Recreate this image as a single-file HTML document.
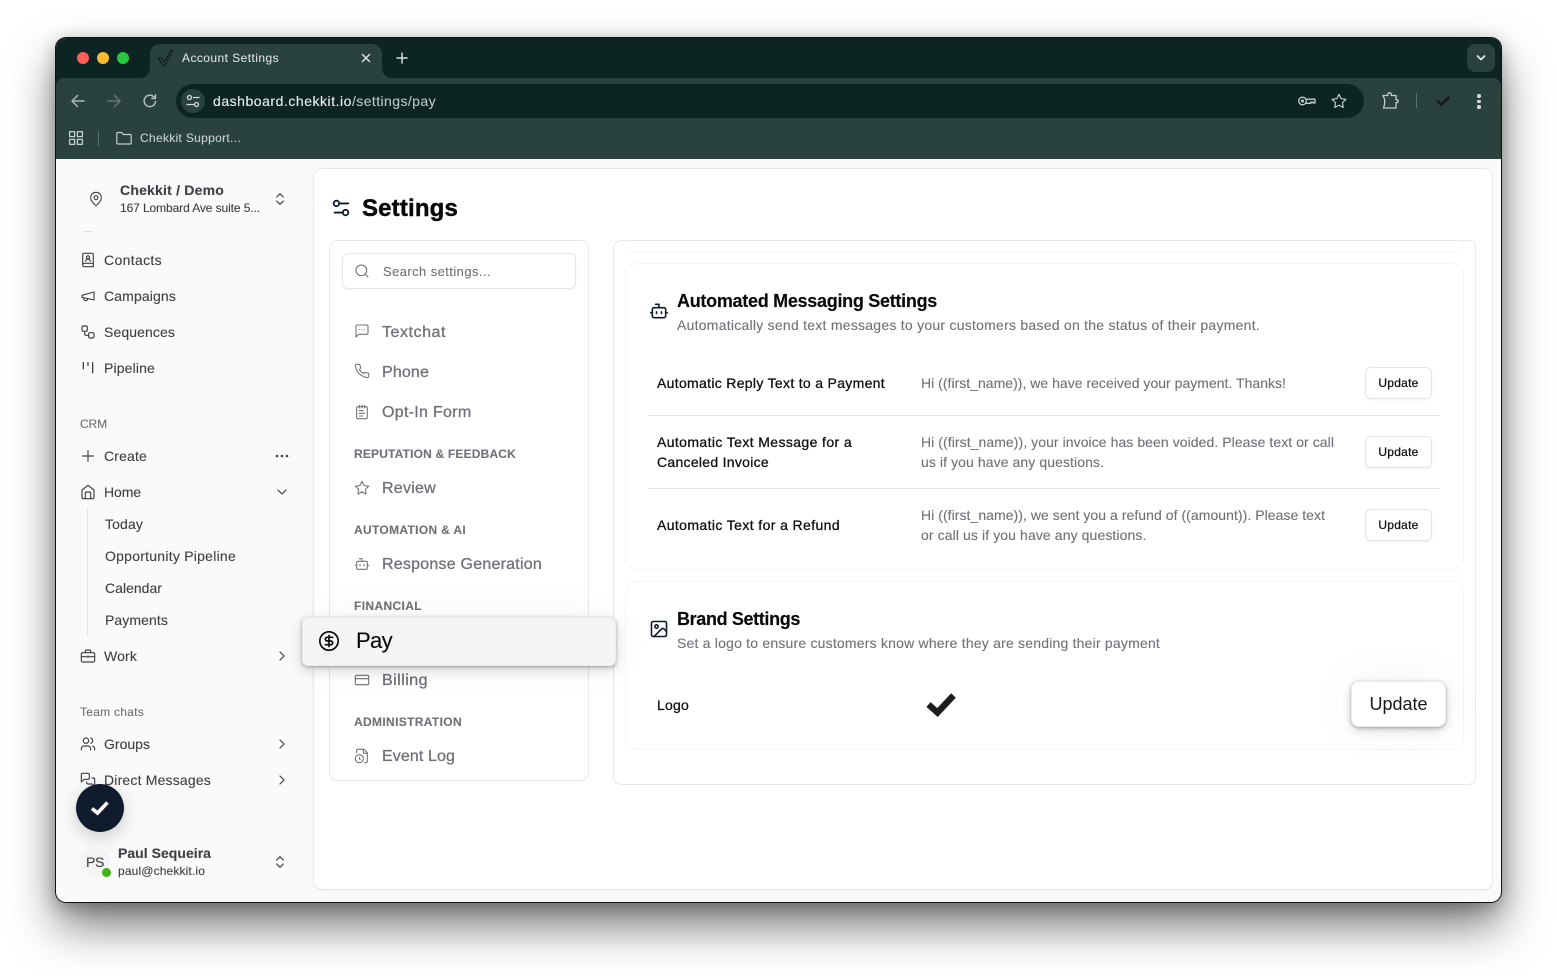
<!DOCTYPE html>
<html lang="en"><head><meta charset="utf-8"><title>Account Settings</title>
<style>
*{box-sizing:border-box}
html,body{margin:0;padding:0;width:1557px;height:976px;overflow:hidden;background:#fff;font-family:"Liberation Sans",Arial,sans-serif}
.a{position:absolute}
#win{position:absolute;left:56px;top:38px;width:1445px;height:864px;border-radius:10px;background:#fafafa;box-shadow:0 0 0 1px #111,0 24px 46px rgba(0,0,0,.52),0 4px 18px rgba(0,0,0,.28)}
#root{position:absolute;left:0;top:0;width:1557px;height:976px;overflow:hidden}
.t{position:absolute;white-space:nowrap;line-height:20px;margin-top:-10px;color:#3f3f46;font-size:14px;-webkit-text-stroke:.12px currentColor}
.s12{font-size:12px}.s13{font-size:13px}.s16{font-size:16px}
.b{font-weight:700}
.nav{font-size:16px;color:#71717a;-webkit-text-stroke:.3px #71717a}
.cap{font-size:12px;font-weight:700;color:#71717a}
.lab{color:#111;-webkit-text-stroke:.3px #111}
.msg{color:#71717a}
.hd{font-size:18px;font-weight:700;color:#0a0a0a;-webkit-text-stroke:.15px #0a0a0a}
svg.i{position:absolute;fill:none;stroke:currentColor;stroke-width:2;stroke-linecap:round;stroke-linejoin:round;overflow:visible}
.sb{color:#3f3f46;width:16px;height:16px}
.sn{color:#71717a;width:16px;height:16px}
.br{color:#c3cfcc;width:18px;height:18px}
.btn{position:absolute;left:1365px;width:67px;height:32px;border:1px solid #e5e5e5;border-radius:6px;background:#fff;box-shadow:0 1px 2px rgba(0,0,0,.06);font:12px/30px "Liberation Sans",sans-serif;color:#111;text-align:center;padding:0;-webkit-text-stroke:.25px #111;letter-spacing:.25px}
.card{position:absolute;background:#fff;border:1px solid #f6f6f6;border-radius:12px}
</style></head><body>
<div id="root">
<div id="win"></div>

<!-- browser chrome -->
<div class="a" style="left:56px;top:38px;width:1445px;height:121px;background:#0c2522;border-radius:10px 10px 0 0"></div>
<div class="a" style="left:56px;top:78px;width:1445px;height:81px;background:#2a423e;border-radius:8px 8px 0 0"></div>
<div class="a" style="left:150px;top:44px;width:232px;height:34px;background:#2a423e;border-radius:10px 10px 0 0"></div>
<svg class="a" style="left:140px;top:68px" width="10" height="10"><path d="M10 0V10H0A10 10 0 0 0 10 0Z" fill="#2a423e"/></svg>
<svg class="a" style="left:382px;top:68px" width="10" height="10"><path d="M0 0V10H10A10 10 0 0 1 0 0Z" fill="#2a423e"/></svg>
<div class="a" style="left:77px;top:52px;width:12px;height:12px;border-radius:50%;background:#ff5f57"></div>
<div class="a" style="left:97px;top:52px;width:12px;height:12px;border-radius:50%;background:#febc2e"></div>
<div class="a" style="left:117px;top:52px;width:12px;height:12px;border-radius:50%;background:#28c840"></div>
<svg class="a" style="left:157px;top:49px" width="18" height="18" fill="none" stroke="#0f1c1c" stroke-width="1" stroke-linejoin="round"><path d="M1.500 9.500 4 8.500 7 13 14 1.500 16 1 7.500 16.500 6 16.500Z"/></svg>
<span class="t s12" style="left:182px;top:58px;color:#d8dfdd;--w:97">Account Settings</span>
<svg class="i" style="left:361px;top:53px;color:#d8dfdd;stroke-width:1.500" width="10" height="10" viewBox="0 0 10 10"><path d="M1.500 1.500l7 7M8.500 1.500l-7 7"/></svg>
<svg class="i" style="left:396px;top:52px;color:#d8dfdd;stroke-width:1.500" width="12" height="12" viewBox="0 0 12 12"><path d="M6 1v10M1 6h10"/></svg>
<div class="a" style="left:1467px;top:44px;width:28px;height:28px;border-radius:8px;background:#2a423e"></div>
<svg class="i" style="left:1476px;top:55px;color:#e3e8e7;stroke-width:1.700" width="10" height="6" viewBox="0 0 10 6"><path d="M1.500 1 5 4.500 8.500 1"/></svg>

<svg class="i" style="left:70px;top:93px;color:#a9b7b4;stroke-width:1.500" width="16" height="16" viewBox="0 0 16 16"><path d="M14 8H2.500M7.500 2.500 2 8l5.500 5.500"/></svg>
<svg class="i" style="left:106px;top:93px;color:#64766f;stroke-width:1.500" width="16" height="16" viewBox="0 0 16 16"><path d="M2 8h11.500M8.500 2.500 14 8l-5.500 5.500"/></svg>
<svg class="i" style="left:142px;top:93px;color:#b2bfbc;stroke-width:1.500" width="16" height="16" viewBox="0 0 16 16"><path d="M13.500 8.500A5.700 5.700 0 1 1 11.800 3.800L13.500 5.500M13.500 1.800v3.700H9.800"/></svg>
<div class="a" style="left:176px;top:84px;width:1188px;height:34px;border-radius:17px;background:#0c2522"></div>
<div class="a" style="left:181px;top:89px;width:24px;height:24px;border-radius:50%;background:#2a423e"></div>
<svg class="i" style="left:186px;top:94px;color:#d3dbd9;stroke-width:1.300" width="14" height="14" viewBox="0 0 14 14"><circle cx="3.500" cy="3.500" r="2"/><path d="M7.500 3.500H13M1 10.500h6.500"/><circle cx="10.500" cy="10.500" r="2"/></svg>
<span class="t" style="left:213px;top:101px;color:#e9eeec;--w:139">dashboard.chekkit.io</span>
<span class="t" style="left:352px;top:101px;color:#b7c3c0;--w:84">/settings/pay</span>
<svg class="i" style="left:1298px;top:95px;color:#c3cfcc;stroke-width:1.300" width="18" height="12" viewBox="0 0 18 12"><circle cx="4.500" cy="6" r="3.800"/><circle cx="4.500" cy="6" r=".9"/><path d="M8.300 4.200h8.700v3.800h-2V7h-2v1.300H8.300"/></svg>
<svg class="i br" style="left:1330px;top:92px;stroke-width:1.500" viewBox="0 0 24 24"><path d="M12 3l2.800 5.900 6.400.9-4.600 4.500 1.100 6.400L12 17.700l-5.700 3 1.100-6.400-4.600-4.500 6.400-.9z"/></svg>
<svg class="i br" style="left:1381px;top:92px;stroke-width:1.300" viewBox="0 0 18 18"><path d="M2 3.500h4.700V2.500a1.800 1.800 0 0 1 3.600 0v1H15v4.300h.7a1.400 1.400 0 0 1 0 2.800H15v5.400H2.500L3.600 12.200 3.600 7.200z"/></svg>
<div class="a" style="left:1416px;top:93px;width:1px;height:15px;background:#5a6e6a"></div>
<svg class="a" style="left:1434px;top:93px" width="18" height="16" fill="none"><path d="M3 7.500 7 11.500 15.500 4" stroke="#111" stroke-width="2.600" opacity=".8"/></svg>
<div class="a" style="left:1477px;top:94px;width:3.500px;height:3.500px;border-radius:50%;background:#d3dbd9"></div>
<div class="a" style="left:1477px;top:99.500px;width:3.500px;height:3.500px;border-radius:50%;background:#d3dbd9"></div>
<div class="a" style="left:1477px;top:105px;width:3.500px;height:3.500px;border-radius:50%;background:#d3dbd9"></div>

<svg class="i" style="left:69px;top:131px;color:#c3cfcc;stroke-width:1.300" width="14" height="14" viewBox="0 0 14 14"><rect x=".6" y=".6" width="5" height="5"/><rect x="8.400" y=".6" width="5" height="5"/><rect x=".6" y="8.400" width="5" height="5"/><rect x="8.400" y="8.400" width="5" height="5"/></svg>
<div class="a" style="left:98px;top:131px;width:1px;height:15px;background:#5a6e6a"></div>
<svg class="i" style="left:116px;top:131px;color:#c3cfcc;stroke-width:1.200" width="16" height="14" viewBox="0 0 16 14"><path d="M.8 2.500a1 1 0 0 1 1-1h4l1.500 2h6.900a1 1 0 0 1 1 1v7.500a1 1 0 0 1-1 1H1.800a1 1 0 0 1-1-1z"/></svg>
<span class="t s12" style="left:140px;top:138px;color:#c5cecc;--w:101">Chekkit Support...</span>

<!-- sidebar -->
<svg class="i sb" style="left:88px;top:191px;stroke-width:1.600" viewBox="0 0 24 24"><path d="M20 10c0 6-8 12-8 12s-8-6-8-12a8 8 0 0 1 16 0Z"/><circle cx="12" cy="10" r="3"/></svg>
<span class="t b" style="left:120px;top:190px;--w:104">Chekkit / Demo</span>
<span class="t s12" style="left:120px;top:208px;--w:140">167 Lombard Ave suite 5...</span>
<svg class="i sb" style="left:272px;top:191px;stroke-width:1.800" viewBox="0 0 24 24"><path d="m7 15 5 5 5-5M7 9l5-5 5 5"/></svg>
<div class="a" style="left:83px;top:231px;width:10px;height:1px;background:#e0e0e0"></div>

<svg class="i sb" style="left:80px;top:252px;stroke-width:1.700" viewBox="0 0 24 24"><path d="M4 19.500V4a2 2 0 0 1 2-2h12a2 2 0 0 1 2 2v18H6.500A2.500 2.500 0 0 1 4 19.500Zm0 0A2.500 2.500 0 0 1 6.500 17H20"/><circle cx="12" cy="8" r="2.200"/><path d="M8.500 14a3.500 3.500 0 0 1 7 0"/></svg>
<span class="t" style="left:104px;top:260px;--w:58">Contacts</span>
<svg class="i sb" style="left:80px;top:288px;stroke-width:1.700" viewBox="0 0 24 24"><path d="m3 11 18-5v12L3 14z"/><path d="M11.600 16.800a3 3 0 1 1-5.800-1.600"/></svg>
<span class="t" style="left:104px;top:296px;--w:72">Campaigns</span>
<svg class="i sb" style="left:80px;top:324px;stroke-width:1.700" viewBox="0 0 24 24"><rect x="3" y="3" width="8" height="8" rx="2"/><path d="M7 11v4a2 2 0 0 0 2 2h4"/><rect x="13" y="13" width="8" height="8" rx="2"/></svg>
<span class="t" style="left:104px;top:332px;--w:71">Sequences</span>
<svg class="i sb" style="left:80px;top:360px;stroke-width:2" viewBox="0 0 24 24"><path d="M5 4v9M12 4v4M19 4v15"/></svg>
<span class="t" style="left:104px;top:368px;--w:51">Pipeline</span>

<span class="t s12" style="left:80px;top:424px;color:#71717a;--w:27">CRM</span>
<svg class="i sb" style="left:80px;top:448px;stroke-width:1.700" viewBox="0 0 24 24"><path d="M12 4v16M4 12h16"/></svg>
<span class="t" style="left:104px;top:456px;--w:43">Create</span>
<svg class="a" style="left:275px;top:454px" width="14" height="4"><circle cx="2" cy="2" r="1.300" fill="#3f3f46"/><circle cx="7" cy="2" r="1.300" fill="#3f3f46"/><circle cx="12" cy="2" r="1.300" fill="#3f3f46"/></svg>
<svg class="i sb" style="left:80px;top:484px;stroke-width:1.700" viewBox="0 0 24 24"><path d="m3 9 9-7 9 7v11a2 2 0 0 1-2 2H5a2 2 0 0 1-2-2z"/><path d="M8 22v-8a2 2 0 0 1 2-2h4a2 2 0 0 1 2 2v8"/></svg>
<span class="t" style="left:104px;top:492px;--w:37">Home</span>
<svg class="i sb" style="left:274px;top:484px;stroke-width:1.800" viewBox="0 0 24 24"><path d="m6 9 6 6 6-6"/></svg>
<div class="a" style="left:87px;top:508px;width:1px;height:128px;background:#e4e4e7"></div>
<span class="t" style="left:105px;top:524px;--w:38">Today</span>
<span class="t" style="left:105px;top:556px;--w:131">Opportunity Pipeline</span>
<span class="t" style="left:105px;top:588px;--w:57">Calendar</span>
<span class="t" style="left:105px;top:620px;--w:63">Payments</span>
<svg class="i sb" style="left:80px;top:648px;stroke-width:1.700" viewBox="0 0 24 24"><rect x="2" y="7" width="20" height="14" rx="2"/><path d="M8 7V5a2 2 0 0 1 2-2h4a2 2 0 0 1 2 2v2M2 13h20M12 12v2"/></svg>
<span class="t" style="left:104px;top:656px;--w:33">Work</span>
<svg class="i sb" style="left:274px;top:648px;stroke-width:1.800" viewBox="0 0 24 24"><path d="m9 18 6-6-6-6"/></svg>

<span class="t s12" style="left:80px;top:712px;color:#71717a;--w:64">Team chats</span>
<svg class="i sb" style="left:80px;top:736px;stroke-width:1.700" viewBox="0 0 24 24"><path d="M16 21v-2a4 4 0 0 0-4-4H6a4 4 0 0 0-4 4v2"/><circle cx="9" cy="7" r="4"/><path d="M22 21v-2a4 4 0 0 0-3-3.870M16 3.130a4 4 0 0 1 0 7.750"/></svg>
<span class="t" style="left:104px;top:744px;--w:46">Groups</span>
<svg class="i sb" style="left:274px;top:736px;stroke-width:1.800" viewBox="0 0 24 24"><path d="m9 18 6-6-6-6"/></svg>
<svg class="i sb" style="left:80px;top:772px;stroke-width:1.700" viewBox="0 0 24 24"><path d="M14 9a2 2 0 0 1-2 2H6l-4 4V4c0-1.100.9-2 2-2h8a2 2 0 0 1 2 2z"/><path d="M18 9h2a2 2 0 0 1 2 2v11l-4-4h-6a2 2 0 0 1-2-2v-1"/></svg>
<span class="t" style="left:104px;top:780px;--w:107">Direct Messages</span>
<svg class="i sb" style="left:274px;top:772px;stroke-width:1.800" viewBox="0 0 24 24"><path d="m9 18 6-6-6-6"/></svg>

<div class="a" style="left:76px;top:784px;width:48px;height:48px;border-radius:50%;background:#111b2e;box-shadow:0 6px 18px rgba(0,0,0,.18)"></div>
<svg class="a" style="left:90px;top:799px" width="20" height="18" fill="none"><path d="M2 9.500 7.500 14 17.500 3.500" stroke="#fff" stroke-width="3.600"/></svg>

<div class="a" style="left:80px;top:847px;width:30px;height:30px;border-radius:50%;background:#f4f4f5"></div>
<span class="t" style="left:86px;top:862px;--w:18">PS</span>
<div class="a" style="left:102px;top:868px;width:9px;height:9px;border-radius:50%;background:#3fb50f"></div>
<span class="t b" style="left:118px;top:853px;--w:93">Paul Sequeira</span>
<span class="t s12" style="left:118px;top:871px;--w:87">paul@chekkit.io</span>
<svg class="i sb" style="left:272px;top:854px;stroke-width:1.800" viewBox="0 0 24 24"><path d="m7 15 5 5 5-5M7 9l5-5 5 5"/></svg>

<!-- main panel -->
<div class="a" style="left:312.500px;top:167.500px;width:1180px;height:722px;background:#fff;border:1px solid #e9e9e9;border-radius:9px;box-shadow:0 1px 1px rgba(0,0,0,.04)"></div>
<svg class="i" style="left:330px;top:197px;color:#111b2e" width="22" height="22" viewBox="0 0 24 24"><path d="M20 7h-9M14 17H5"/><circle cx="17" cy="17" r="3"/><circle cx="7" cy="7" r="3"/></svg>
<span class="t b" style="left:362px;top:209px;font-size:24px;color:#09090b;--w:96;line-height:30px;margin-top:-15px;-webkit-text-stroke:.45px #09090b">Settings</span>

<!-- settings nav -->
<div class="a" style="left:329px;top:240px;width:260px;height:541px;background:#fff;border:1px solid #e8e8e8;border-radius:8px"></div>
<div class="a" style="left:342px;top:253px;width:234px;height:36px;background:#fff;border:1px solid #e6e6e6;border-radius:6px;box-shadow:0 1px 2px rgba(0,0,0,.05)"></div>
<svg class="i sn" style="left:354px;top:263px;stroke-width:1.600" viewBox="0 0 24 24"><circle cx="11" cy="11" r="8"/><path d="m21 21-4.300-4.300"/></svg>
<span class="t s13" style="left:383px;top:272px;color:#71717a;--w:108">Search settings...</span>
<svg class="i sn" style="left:354px;top:323px;stroke-width:1.600" viewBox="0 0 24 24"><path d="M21 15a2 2 0 0 1-2 2H7l-4 4V5a2 2 0 0 1 2-2h14a2 2 0 0 1 2 2z"/><path d="M8 10h.01M12 10h.01M16 10h.01"/></svg>
<span class="t nav" style="left:382px;top:333px;--w:64">Textchat</span>
<svg class="i sn" style="left:354px;top:363px;stroke-width:1.600" viewBox="0 0 24 24"><path d="M22 16.920v3a2 2 0 0 1-2.180 2 19.790 19.790 0 0 1-8.630-3.070 19.500 19.500 0 0 1-6-6 19.790 19.790 0 0 1-3.070-8.670A2 2 0 0 1 4.110 2h3a2 2 0 0 1 2 1.720 12.840 12.840 0 0 0 .7 2.810 2 2 0 0 1-.45 2.110L8.090 9.910a16 16 0 0 0 6 6l1.270-1.270a2 2 0 0 1 2.110-.45 12.840 12.840 0 0 0 2.810.7A2 2 0 0 1 22 16.920z"/></svg>
<span class="t nav" style="left:382px;top:373px;--w:47">Phone</span>
<svg class="i sn" style="left:354px;top:404px;stroke-width:1.600" viewBox="0 0 24 24"><path d="M8 2v4M12 2v4M16 2v4"/><rect x="4" y="4" width="16" height="18" rx="2"/><path d="M8 10h6M8 14h8M8 18h5"/></svg>
<span class="t nav" style="left:382px;top:413px;--w:89.500">Opt-In Form</span>
<span class="t cap" style="left:354px;top:454px;--w:162">REPUTATION &amp; FEEDBACK</span>
<svg class="i sn" style="left:354px;top:480px;stroke-width:1.600" viewBox="0 0 24 24"><path d="M12 2l3.090 6.260L22 9.270l-5 4.870 1.180 6.880L12 17.770l-6.180 3.250L7 14.140 2 9.270l6.910-1.010z"/></svg>
<span class="t nav" style="left:382px;top:489px;--w:54">Review</span>
<span class="t cap" style="left:354px;top:530px;--w:112">AUTOMATION &amp; AI</span>
<svg class="i sn" style="left:354px;top:556px;stroke-width:1.600" viewBox="0 0 24 24"><path d="M12 8V4H8"/><rect x="4" y="8" width="16" height="12" rx="2"/><path d="M2 14h2M20 14h2M15 13v2M9 13v2"/></svg>
<span class="t nav" style="left:382px;top:565px;--w:160">Response Generation</span>
<span class="t cap" style="left:354px;top:606px;--w:68">FINANCIAL</span>
<svg class="i sn" style="left:354px;top:672px;stroke-width:1.600" viewBox="0 0 24 24"><rect x="2" y="5" width="20" height="14" rx="2"/><path d="M2 10h20"/></svg>
<span class="t nav" style="left:382px;top:681px;--w:46">Billing</span>
<span class="t cap" style="left:354px;top:722px;--w:108">ADMINISTRATION</span>
<svg class="i sn" style="left:354px;top:748px;stroke-width:1.600" viewBox="0 0 24 24"><path d="M16 22h2a2 2 0 0 0 2-2V7l-5-5H6a2 2 0 0 0-2 2v3"/><path d="M14 2v4a2 2 0 0 0 2 2h4"/><circle cx="8" cy="16" r="6"/><path d="M9.500 17.500 8 16.250V14"/></svg>
<span class="t nav" style="left:382px;top:757px;--w:73">Event Log</span>

<!-- content container -->
<div class="a" style="left:613px;top:240px;width:863px;height:545px;background:#fff;border:1px solid #e8e8e8;border-radius:8px;overflow:hidden">
  <div class="a" style="left:11px;top:-40px;width:839px;height:51px;border:1px solid #f6f6f6;border-radius:12px"></div>
</div>
<div class="card" style="left:625px;top:263px;width:839px;height:307px"></div>
<div class="card" style="left:625px;top:581px;width:839px;height:169px"></div>

<svg class="i" style="left:649px;top:301px;color:#111b2e;stroke-width:1.900" width="20" height="20" viewBox="0 0 24 24"><path d="M12 8V4H8"/><rect x="4" y="8" width="16" height="12" rx="2"/><path d="M2 14h2M20 14h2M15 13v2M9 13v2"/></svg>
<span class="t hd" style="left:677px;top:301px;--w:260">Automated Messaging Settings</span>
<span class="t msg" style="left:677px;top:325px;--w:583">Automatically send text messages to your customers based on the status of their payment.</span>

<span class="t lab" style="left:657px;top:383px;--w:228">Automatic Reply Text to a Payment</span>
<span class="t msg" style="left:921px;top:383px;--w:365">Hi ((first_name)), we have received your payment. Thanks!</span>
<button class="btn" style="top:367px">Update</button>
<div class="a" style="left:649px;top:415px;width:791px;height:1px;background:#e5e5e5"></div>
<span class="t lab" style="left:657px;top:442px;--w:195">Automatic Text Message for a</span>
<span class="t lab" style="left:657px;top:462px;--w:112">Canceled Invoice</span>
<span class="t msg" style="left:921px;top:442px;--w:413">Hi ((first_name)), your invoice has been voided. Please text or call</span>
<span class="t msg" style="left:921px;top:462px;--w:183">us if you have any questions.</span>
<button class="btn" style="top:436px">Update</button>
<div class="a" style="left:649px;top:488px;width:791px;height:1px;background:#e5e5e5"></div>
<span class="t lab" style="left:657px;top:525px;--w:183">Automatic Text for a Refund</span>
<span class="t msg" style="left:921px;top:515px;--w:404">Hi ((first_name)), we sent you a refund of ((amount)). Please text</span>
<span class="t msg" style="left:921px;top:535px;--w:225.500">or call us if you have any questions.</span>
<button class="btn" style="top:509px">Update</button>

<svg class="i" style="left:649px;top:619px;color:#111b2e;stroke-width:1.900" width="20" height="20" viewBox="0 0 24 24"><rect x="3" y="3" width="18" height="18" rx="2"/><circle cx="9" cy="9" r="2"/><path d="m21 15-3.086-3.086a2 2 0 0 0-2.828 0L6 21"/></svg>
<span class="t hd" style="left:677px;top:619px;--w:123">Brand Settings</span>
<span class="t msg" style="left:677px;top:643px;--w:483">Set a logo to ensure customers know where they are sending their payment</span>
<span class="t lab" style="left:657px;top:705px;--w:32">Logo</span>
<svg class="a" style="left:924px;top:690px" width="34" height="28" fill="none"><path d="M4.500 14.500 13.500 22.500 29.500 5.500" stroke="#1e1e1e" stroke-width="6.400" stroke-linejoin="miter"/></svg>
<button class="a" style="left:1351px;top:681px;width:95px;height:46px;background:#fff;border:1px solid #ececec;border-radius:8px;box-shadow:0 1px 3px rgba(0,0,0,.3),0 4px 10px rgba(0,0,0,.12),0 0 50px rgba(0,0,0,.05);font:18px/44px 'Liberation Sans',sans-serif;color:#18181b;padding:0;text-align:center">Update</button>

<!-- floating Pay row -->
<div class="a" style="left:302px;top:617px;width:314px;height:49px;background:#f4f4f5;border-radius:6px;border:1px solid #ececec;box-shadow:0 1px 3px rgba(0,0,0,.3),0 5px 12px rgba(0,0,0,.13),0 0 40px rgba(0,0,0,.05)"></div>
<svg class="i" style="left:318px;top:630px;color:#0a0a0a;stroke-width:1.800" width="22" height="22" viewBox="0 0 24 24"><circle cx="12" cy="12" r="10"/><path d="M16 8h-6a2 2 0 1 0 0 4h4a2 2 0 1 1 0 4H8M12 18V6"/></svg>
<span class="t" style="left:356px;top:641px;font-size:22px;color:#0a0a0a;--w:36;line-height:28px;margin-top:-14px">Pay</span>
</div>
<script>
document.querySelectorAll('.t').forEach(function(e){
  var w=parseFloat(getComputedStyle(e).getPropertyValue('--w'));
  if(!w)return;
  var n=e.textContent.length;
  var r=e.getBoundingClientRect().width;
  e.style.letterSpacing=((w-r)/n).toFixed(3)+'px';
});
</script>
</body></html>
